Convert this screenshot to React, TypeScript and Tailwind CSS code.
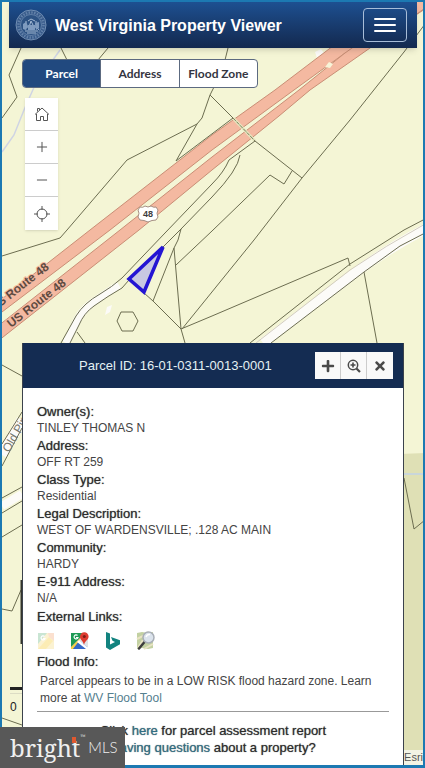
import React from 'react';
import { Plus, Minus } from 'lucide-react';
import { FaPlus, FaTimes } from 'react-icons/fa';

const tabs = ['Parcel', 'Address', 'Flood Zone'];

const details = [
  { label: 'Owner(s):', value: 'TINLEY THOMAS N' },
  { label: 'Address:', value: 'OFF RT 259' },
  { label: 'Class Type:', value: 'Residential' },
  { label: 'Legal Description:', value: 'WEST OF WARDENSVILLE; .128 AC MAIN' },
  { label: 'Community:', value: 'HARDY' },
  { label: 'E-911 Address:', value: 'N/A' },
];

// Lot boundaries, in map units
const boundaries = [
  'M21 48L9 75L17 97L2 118',
  'M61 48L67 60M108 48L98 60',
  'M228 48L225 60',
  'M214 87L210 95L202 118L197 124L176 161L233 118',
  'M197 124L127 160L67 230L60 238L2 256',
  'M210 95L233 118M255 141L302 178M229 160L255 141',
  'M425 24L404 52L350 120L302 178L254 240L182 329',
  'M292 171L284 184L270 175L212 231L176 265',
  'M229 160Q224 172 212 184L165 233L122 278Q112 287 100 294Q84 303 76 316L61 343',
  'M240 155Q238 170 212 197L181 229L163 247',
  'M129 280L122 288Q108 296 94 306Q84 313 79 325L70 343',
  'M181 229L178 240L174 248L153 301',
  'M174 248L181 329L185 343',
  'M144 293L153 301L181 329L212 316L348 258L350 266',
  'M250 343L350 264L404 230L425 219',
  'M271 343L364 272L400 246L425 233',
  'M364 272L377 343',
  'M121 312L133 312L138 321L133 331L122 331L117 321Z',
  'M77 332L85 343',
  'M2 365L22 376',
  'M2 444L22 412M2 466L22 428',
  'M2 498L22 487M2 513L22 501M2 537L22 525',
  'M2 609L12 611L21 590',
  'M2 718L22 725',
  'M404 478L414 529L425 520',
];

const ParcelMap = () => (
  <svg
    className="absolute inset-0 h-full w-full"
    viewBox="0 0 425 768"
    preserveAspectRatio="xMidYMin slice"
    fill="none"
    aria-hidden="true"
  >
    <rect width="425" height="768" fill="#f4f5d5" />
    <path d="M400 454L425 453V768H400Z" fill="#dfe0b5" />
    <path d="M400 474H425" stroke="#c9d6da" strokeWidth="2" />

    {/* Stream */}
    <path d="M60 50L35 85L24 110L14 135L2 152" stroke="#cfd4e4" strokeWidth="1.5" />

    {/* Local roads */}
    <path d="M119 285Q105 294 92 303Q80 312 75 325L66 343" stroke="#fcfbf8" strokeWidth="8" />
    <path d="M263 343L350 277Q385 250 425 229" stroke="#fcfbf8" strokeWidth="10" />
    <path d="M256 343L350 270Q385 246 425 224" stroke="#d3cdbf" />
    <path d="M2 455L22 420" stroke="#fcfbf8" strokeWidth="11" />
    <path d="M2 506L22 494" stroke="#fcfbf8" strokeWidth="8" />
    <path d="M107 307l5-2l-2 7l-5 3zM315 52l6-3l3 4l-7 5z" fill="#fcfbf8" />

    {/* US Route 48 */}
    <g fill="#f4b9a1" stroke="#c98e75">
      <path d="M-2 302L90 230L212 135L275 90L329 49L394 0H425V9L370 45L345 53L294 90L212 150L110 230L-2 315Z" />
      <path d="M-2 326L120 230L212 157L299 90L345 53L425 -4V8L370 48L310 90L279 116L212 170L139 230L-2 341Z" />
    </g>
    <path d="M325 67l4-5l4 2l-3 4z" fill="#f7f4d8" />
    <path d="M233 118L255 141" stroke="#e6e8c0" strokeWidth="3" />
    <path d="M233 118L255 141" stroke="#7b7b5c" strokeDasharray="4 1" />

    <g stroke="#6c6d50">
      {boundaries.map((d) => (
        <path key={d} d={d} />
      ))}
    </g>
    <path d="M21.500 580V644" stroke="#33342c" strokeWidth="2" />

    <path d="M163 247L129 279L144 292Z" fill="#c8c8e2" stroke="#2415d3" strokeWidth="3.500" />

    <g fontFamily="Liberation Sans" fill="#5e4a40">
      <g fontSize="12" fontWeight="700" stroke="#f4b9a1" strokeWidth="2" paintOrder="stroke">
        <text transform="translate(-6 312) rotate(-38)">US Route 48</text>
        <text transform="translate(11 328) rotate(-38)">US Route 48</text>
      </g>
      <text transform="translate(9 453) rotate(-60)" fontSize="12" fill="#77776d">Old Pine</text>
    </g>

    {/* Highway shield */}
    <path
      d="M140 207q3 1 5-1q3 2 6 0q3 2 5 1l2 3q-2 3 0 7l-2 3q-4 0-8 2q-4-2-8-2l-2-3q2-4 0-7z"
      fill="#fff"
      stroke="#a58f83"
    />
    <text x="148" y="217" textAnchor="middle" fontFamily="Liberation Sans" fontSize="9" fontWeight="700" fill="#3c3c3c">48</text>

    {/* Scale bar */}
    <path d="M10 688.500H24" stroke="#222" strokeWidth="3" />
    <path d="M10 693.500H24" stroke="#dcdcc4" />
    <text x="10" y="711" fontFamily="Liberation Sans" fontSize="12" fill="#222">0</text>
  </svg>
);

const StateSeal = () => (
  <svg className="h-8 w-8" viewBox="0 0 32 32" fill="none" stroke="#8fa9c9">
    <circle cx="16" cy="16" r="15" fill="#375a8a" strokeWidth=".7" />
    <circle cx="16" cy="16" r="12.500" strokeWidth="2.500" strokeDasharray="1.500 1.300" opacity=".5" />
    <circle cx="16" cy="16" r="10.500" fill="#2d5283" strokeWidth=".5" />
    <path d="M9 20q3-3 5-2l2-6l3 6q3-1 5 3M11 12v6M21 12v6M13 12l3-2l4 2M10 22h13M12 24h9" stroke="#a5bad4" />
    <path d="M8 15l3-2l2 4l-2 4l-3-1zM20 14l4-1v6l-3 2zM13 16h7v5h-7z" fill="#7f9bbf" stroke="none" />
  </svg>
);

const HomeIcon = () => (
  <svg className="h-4 w-4" viewBox="0 0 16 16" fill="none" stroke="#555">
    <path d="M1 8.500L8 2l7 6.500M2.500 8v6.500h4v-4h3v4h4V8M3.500 5.500V2.500h2V4" />
  </svg>
);

const LocateIcon = () => (
  <svg className="h-4 w-4" viewBox="0 0 16 16" fill="none" stroke="#555">
    <circle cx="8" cy="8" r="5" />
    <path d="M8 0v4M8 12v4M0 8h4M12 8h4" />
  </svg>
);

const ZoomToIcon = () => (
  <svg className="h-3.5 w-3.5" viewBox="0 0 14 14" fill="none" stroke="#4a4a4a">
    <circle cx="6" cy="6" r="4.700" strokeWidth="1.500" />
    <path d="M9.500 9.500L13 13" strokeWidth="2.200" />
    <path d="M3.500 6h5M6 3.500v5" strokeWidth="1.600" />
  </svg>
);

const StreetViewLogo = () => (
  <svg className="h-5 w-5" viewBox="0 0 20 20">
    <path d="M1 2h16v16H1z" fill="#fbf2d2" />
    <path d="M1 2h9L1 13z" fill="#c9e5d3" />
    <path d="M1 18L12 6l4 4l-7 8z" fill="#fcecb4" />
    <path d="M11 2h6v8l-5-4z" fill="#fbe0cf" />
    <path d="M7.500 5.500a2 2 0 1 0 .5 2H6" fill="none" stroke="#fff" strokeWidth="1.200" />
  </svg>
);

const MapsLogo = () => (
  <svg className="h-5 w-5" viewBox="0 0 20 20">
    <path d="M1 2h16v16H1z" fill="#4285f4" />
    <path d="M1 2h14L1 16z" fill="#1d9a55" />
    <path d="M1 16L12 5l2 2L3 18H1z" fill="#f7cf47" />
    <path d="M9 10l9 8H3z" fill="#3568c9" />
    <path d="M9 9l9 8V7l-5-2z" fill="#dfe3e6" />
    <path d="M9 9l9 8v1h-2L7 11z" fill="#fff" />
    <path d="M14 14c-.5-4-4-5-4-8.500a4.300 4.300 0 0 1 8.600 0C18.600 9 14.500 10 14 14z" fill="#dd3c30" />
    <circle cx="14.300" cy="5.500" r="1.500" fill="#7d1d17" />
    <path d="M7.500 4.500a2 2 0 1 0 .5 2H6" fill="none" stroke="#fff" strokeWidth="1.200" />
  </svg>
);

const BingLogo = () => (
  <svg className="h-5 w-5" viewBox="0 0 20 20" fill="#12837f">
    <path d="M3 1l4 1.500v11L12 11l-2.500-1.200L8 6l9 3.200v4L7 19l-4-2.500z" />
  </svg>
);

const OsmLogo = () => (
  <svg className="h-5 w-5" viewBox="0 0 20 20" fill="none">
    <path d="M1 2l5-1l6 1l5-1v16l-5 1l-6-1l-5 1z" fill="#c3d1a2" />
    <path d="M1 8l6-3l5-4M2 17l5-8M8 18l9-5" stroke="#e9e3c4" strokeWidth="2" />
    <path d="M8.500 11L3 17.500" stroke="#3d3d3d" strokeWidth="2.500" strokeLinecap="round" />
    <circle cx="12.500" cy="6.500" r="5.500" fill="#dbe3ec" stroke="#a9afb7" strokeWidth="1.500" />
    <path d="M10 6q1-3 4-2.500" stroke="#fff" strokeWidth="1.500" />
  </svg>
);

const links = [
  { name: 'Street view', icon: <StreetViewLogo /> },
  { name: 'Google Maps', icon: <MapsLogo /> },
  { name: 'Bing Maps', icon: <BingLogo /> },
  { name: 'OpenStreetMap', icon: <OsmLogo /> },
];

const mapTools = [
  { name: 'Home', icon: <HomeIcon /> },
  { name: 'Zoom in', icon: <Plus className="h-4 w-4" strokeWidth={1.5} /> },
  { name: 'Zoom out', icon: <Minus className="h-4 w-4" strokeWidth={1.5} /> },
  { name: 'Locate', icon: <LocateIcon /> },
];

const parcelActions = [
  { name: 'Add', icon: <FaPlus className="h-3.5 w-3.5" /> },
  { name: 'Zoom to', icon: <ZoomToIcon /> },
  { name: 'Close', icon: <FaTimes className="h-3.5 w-3.5" /> },
];

const Label = ({ children }: { children: React.ReactNode }) => (
  <span className="text-[13px] text-[#2c2c2c] [text-shadow:0_0_1px_#666]">{children}</span>
);

const App = () => {
  return (
    <div className="relative flex min-h-screen flex-col overflow-hidden bg-[#f4f5d5] font-['Liberation_Sans',Arial,sans-serif] text-[13px] leading-[17px] text-[#444]">
      <ParcelMap />

      <header className="relative mt-0.5 mr-2 ml-[9px] flex h-[46px] items-center bg-linear-to-b from-[#1d5091] to-[#13294f] pr-2.5 pl-1.5 shadow-md">
        <StateSeal />
        <h1 className="ml-2 flex-1 text-[16px] font-bold text-white">West Virginia Property Viewer</h1>
        <button
          aria-label="Menu"
          className="flex h-[34px] w-11 flex-col items-center justify-center gap-1 rounded border border-[#a8bdd8]"
        >
          <span className="h-0.5 w-[22px] rounded bg-white"></span>
          <span className="h-0.5 w-[22px] rounded bg-white"></span>
          <span className="h-0.5 w-[22px] rounded bg-white"></span>
        </button>
      </header>

      <nav className="relative mt-[11px] ml-[22px] flex h-[29px] w-[236px] overflow-hidden rounded border border-[#5c6a80] bg-white font-[Lato,sans-serif] text-[12px] font-bold">
        {tabs.map((tab, index) => (
          <button
            key={tab}
            className={index === 0 ? 'flex-1 bg-[#21497f] text-white' : 'flex-1 border-l border-[#5c6a80] text-[#34353f]'}
          >
            {tab}
          </button>
        ))}
      </nav>

      <div className="relative mt-2.5 ml-[25px] flex w-[33px] flex-col divide-y divide-[#ccc] bg-white text-[#555] shadow">
        {mapTools.map((tool) => (
          <button key={tool.name} aria-label={tool.name} className="flex h-[33px] items-center justify-center">
            {tool.icon}
          </button>
        ))}
      </div>

      <section className="relative mt-auto mr-[21px] mb-[3px] ml-[22px] flex flex-col border-x border-[#3b424c] bg-white">
        <div className="flex h-[45px] items-center bg-[#142c52] pr-2.5 pl-14 text-[#e4f1f4]">
          <h2 className="flex-1">Parcel ID: 16-01-0311-0013-0001</h2>
          <div className="flex divide-x divide-[#ccc] bg-[#f9f9f9] text-[#4a4a4a]">
            {parcelActions.map((action) => (
              <button key={action.name} aria-label={action.name} className="flex h-[27px] w-[26px] items-center justify-center">
                {action.icon}
              </button>
            ))}
          </div>
        </div>

        <div className="px-3.5 pt-[15px] pb-[9px] text-[12px] leading-[17px]">
          <dl>
            {details.map((item) => (
              <div key={item.label}>
                <dt className="h-[17px]"><Label>{item.label}</Label></dt>
                <dd className="h-[17px]">{item.value}</dd>
              </div>
            ))}
          </dl>
          <p className="mt-px h-[17px]"><Label>External Links:</Label></p>
          <div className="mt-1.5 flex gap-[13px]">
            {links.map((link) => (
              <a key={link.name} href="#" aria-label={link.name}>
                {link.icon}
              </a>
            ))}
          </div>
          <p className="mt-0.5 h-[17px]"><Label>Flood Info:</Label></p>
          <p className="mt-[3px] pl-[3px]">
            Parcel appears to be in a LOW RISK flood hazard zone. Learn more at{' '}
            <a href="#" className="text-[#55808f]">WV Flood Tool</a>
          </p>
          <hr className="mt-1 mb-2.5 border-[#999]" />
          <div className="text-center">
            <p className="h-[17px]">
              <Label>Click <a href="#" className="text-[#2f6f86]">here</a> for parcel assessment report</Label>
            </p>
            <p className="h-[17px]">
              <Label><a href="#" className="text-[#2f6f86]">Having questions</a> about a property?</Label>
            </p>
          </div>
        </div>
      </section>

      <div className="absolute right-0.5 bottom-[3px] bg-[#f3f3e4] text-[11px] leading-[15px] text-[#555]">Esri</div>

      {/* Window frame */}
      <div className="pointer-events-none absolute inset-0 border-x-2 border-t-2 border-b-3 border-[#1c79b2]"></div>

      <div className="absolute bottom-0 left-0 flex h-[41px] w-[125px] items-center gap-2 bg-[#585858] pl-2.5 text-[#f0f0f0]">
        <span className="relative font-['Noto_Serif','DejaVu_Serif','Liberation_Serif',serif] text-[24px] leading-[30px]">
          bright
          <span className="absolute top-1 right-1 h-1.5 w-1 bg-[#e0582f]"></span>
          <span className="absolute top-0 left-full text-[6px] leading-[8px]">™</span>
        </span>
        <span className="font-[Lato,sans-serif] text-[15px] font-light">MLS</span>
      </div>
    </div>
  );
};

export default App;
